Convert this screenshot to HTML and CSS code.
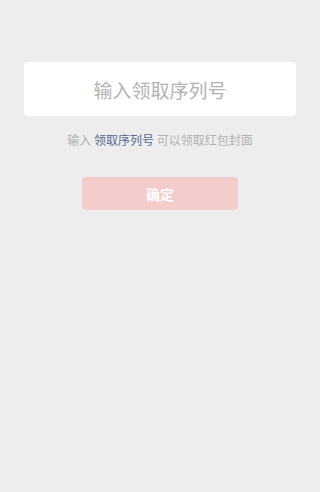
FILE: index.html
```html
<!DOCTYPE html>
<html>
<head>
  <meta charset="UTF-8">
  <title>领取红包封面</title>
  <link rel="stylesheet" href="styles.css">
</head>
<body>
  <div class="page">
    <div class="code-box">
      <input type="text" class="code-input" placeholder="输入领取序列号">
    </div>
    <p class="hint">输入 <span class="link">领取序列号</span> 可以领取红包封面</p>
    <button class="confirm" disabled>确定</button>
  </div>
</body>
</html>
```

FILE: styles.css
```css
html, body {
  margin: 0;
  height: 100%;
}

body {
  background-color: #ededed;
  font-family: 'Noto Sans CJK SC', 'Noto Sans', sans-serif;
}

.page {
  display: flex;
  flex-direction: column;
  align-items: center;
  padding: 62px 24px 0;
}

.code-box {
  width: 100%;
  height: 54px;
  background-color: #fff;
  border-radius: 4px;
  display: flex;
  align-items: center;
}

.code-input {
  width: 100%;
  border: none;
  outline: none;
  background: transparent;
  text-align: center;
  font-family: inherit;
  font-size: 19px;
  color: #333;
  padding: 0;
}

.code-input::placeholder {
  color: #b2b2b2;
}

.hint {
  margin: 15px 0 0;
  font-size: 12px;
  line-height: 17px;
  color: #b2b2b2;
  white-space: nowrap;
}

.hint .link {
  color: #576b95;
}

.confirm {
  margin-top: 29px;
  width: 156px;
  height: 33px;
  border: none;
  border-radius: 4px;
  background-color: #f5cccc;
  color: #fff;
  font-family: inherit;
  font-size: 14px;
  font-weight: bold;
  padding: 0;
}
```
